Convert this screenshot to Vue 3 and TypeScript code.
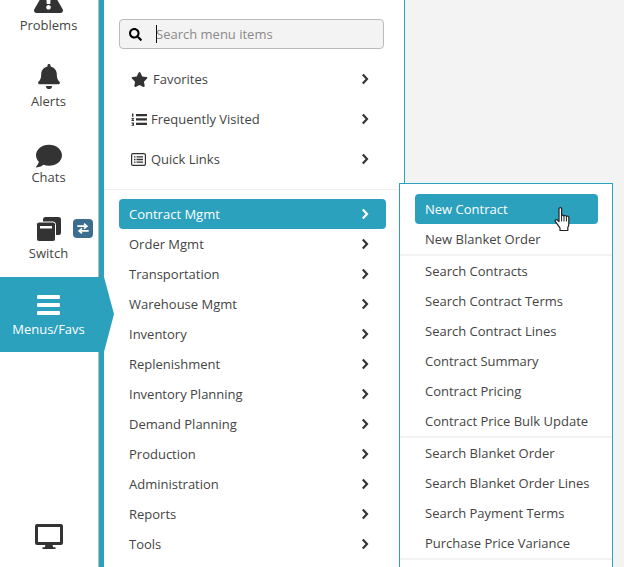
<template>
  <div class="page">
    <aside class="rail">
      <a v-for="item in railItems" :key="item.label" class="rail-item" :class="item.cls">
        <svg class="rail-icon" :viewBox="item.box" :style="{ width: item.w + 'px', height: item.h + 'px' }">
          <path :d="item.d" fill="currentColor" />
        </svg>
        <span class="rail-label">{{ item.label }}</span>
      </a>
      <a class="rail-item switch">
        <svg class="rail-icon" viewBox="0 0 26 26" width="26" height="26">
          <rect x="7" y="1" width="18" height="18" rx="2.5" fill="#333" />
          <rect x="0.5" y="6" width="19" height="19.5" rx="2.5" fill="#333" stroke="#fff" stroke-width="1" />
          <rect x="4" y="10" width="12" height="2.5" fill="#fff" />
        </svg>
        <span class="rail-label">Switch</span>
        <span class="switch-badge">
          <svg viewBox="0 0 20 20" width="20" height="19">
            <path d="M4 7.5h9.5M11 4.8l3.2 2.7-3.2 2.7M16 12.5H6.5M9 9.8l-3.2 2.7 3.2 2.7" fill="none" stroke="#fff" stroke-width="1.7" />
          </svg>
        </span>
      </a>
      <a class="rail-item menus">
        <svg class="bars" viewBox="0 0 23 20" width="23" height="20">
          <path d="M1 0h21a1 1 0 0 1 1 1v2a1 1 0 0 1-1 1H1a1 1 0 0 1-1-1V1a1 1 0 0 1 1-1zm0 8h21a1 1 0 0 1 1 1v2a1 1 0 0 1-1 1H1a1 1 0 0 1-1-1V9a1 1 0 0 1 1-1zm0 8h21a1 1 0 0 1 1 1v2a1 1 0 0 1-1 1H1a1 1 0 0 1-1-1v-2a1 1 0 0 1 1-1z" fill="#fff" />
        </svg>
        <span class="rail-label">Menus/Favs</span>
      </a>
      <div class="rail-bottom">
        <svg viewBox="0 0 28 25" width="28" height="25">
          <path d="M2 0h24a2 2 0 0 1 2 2v17a2 2 0 0 1-2 2h-8.500l.8 2.200h2.200V25H7.500v-1.800h2.200l.8-2.200H2a2 2 0 0 1-2-2V2a2 2 0 0 1 2-2zm1 3v15h22V3z" fill="#333" fill-rule="evenodd" />
        </svg>
      </div>
    </aside>

    <div class="strip"></div>

    <section class="panel">
      <div class="search">
        <svg class="search-icon" viewBox="0 0 512 512" width="13" height="13">
          <path d="M505 442.7L405.300 343c-4.500-4.500-10.600-7-17-7H372c27.600-35.300 44-79.700 44-128C416 93.100 322.900 0 208 0S0 93.100 0 208s93.100 208 208 208c48.300 0 92.700-16.400 128-44v16.300c0 6.400 2.500 12.500 7 17l99.700 99.700c9.400 9.400 24.600 9.400 33.900 0l28.300-28.300c9.400-9.400 9.400-24.600.1-34zM208 336c-70.700 0-128-57.200-128-128 0-70.700 57.200-128 128-128 70.700 0 128 57.200 128 128 0 70.700-57.200 128-128 128z" fill="#000" />
        </svg>
        <span class="search-text">Search menu items</span>
        <span class="caret"></span>
      </div>

      <ul class="shortcuts">
        <li class="shortcut">
          <svg class="star" viewBox="0 0 576 512" width="17" height="15">
            <path d="M259.300 17.800L194 150.200 47.900 171.500c-26.200 3.800-36.700 36.100-17.700 54.600l105.700 103-25 145.500c-4.500 26.300 23.200 46 46.400 33.700L288 439.600l130.700 68.700c23.200 12.200 50.900-7.400 46.400-33.700l-25-145.500 105.700-103c19-18.500 8.500-50.800-17.700-54.600L382 150.200 316.700 17.800c-11.700-23.600-45.600-23.900-57.400 0z" fill="#333" />
          </svg>
          <span class="shortcut-name">Favorites</span>
          <svg class="chev" viewBox="0 0 8 12" width="8" height="12"><path d="M1.800 1.500L6 6l-4.200 4.500" /></svg>
        </li>
        <li class="shortcut">
          <svg class="list-ol" viewBox="0 0 16 13" width="16" height="13">
            <path d="M5 1h11v2.300H5zM5 5.300h11v2.300H5zM5 9.700h11V12H5z" fill="#333" />
            <path d="M1 .5h1.400v3.200H1zM.5 5h2.500v1L1.800 7h1.200v1H.5V7l1.200-1H.5zM.5 9.500H3v3.300H.5v-.8h1.400v-.5H1v-.7h.9v-.4H.5z" fill="#333" />
          </svg>
          <span class="shortcut-name tight">Frequently Visited</span>
          <svg class="chev" viewBox="0 0 8 12" width="8" height="12"><path d="M1.800 1.500L6 6l-4.200 4.500" /></svg>
        </li>
        <li class="shortcut">
          <svg class="list-alt" viewBox="0 0 15 13" width="15" height="13">
            <rect x="0.600" y="0.600" width="13.800" height="11.800" rx="1.400" fill="none" stroke="#333" stroke-width="1.200" />
            <path d="M3 3.200h1.500v1.400H3zM3 5.800h1.500v1.400H3zM3 8.400h1.500v1.400H3zM5.500 3.200H12v1.400H5.500zM5.500 5.800H12v1.400H5.500zM5.500 8.400H12v1.400H5.500z" fill="#333" />
          </svg>
          <span class="shortcut-name wide">Quick Links</span>
          <svg class="chev" viewBox="0 0 8 12" width="8" height="12"><path d="M1.800 1.500L6 6l-4.200 4.500" /></svg>
        </li>
      </ul>

      <ul class="menu">
        <li v-for="(name, i) in menuItems" :key="name" class="menu-row" :class="{ active: i === 0 }">
          <span>{{ name }}</span>
          <svg class="chev" viewBox="0 0 8 12" width="8" height="12"><path d="M1.800 1.500L6 6l-4.200 4.500" /></svg>
        </li>
      </ul>
    </section>

    <div class="rest"></div>

    <div class="flyout">
      <ul v-for="(group, g) in flyoutGroups" :key="g" class="fly-group">
        <li v-for="name in group" :key="name" class="fly-row" :class="{ active: name === 'New Contract' }">{{ name }}</li>
      </ul>
    </div>

    <svg class="hand" viewBox="0 0 18 25" width="18" height="25">
      <path d="M5 1.800c0-1.500 2.600-1.500 2.600 0V9c0-1 2.300-1.200 2.400.2 .2-1 2.300-1 2.400.4 .3-.9 2.300-.7 2.400.7 v6.700c0 1.500-.5 2.600-1 3.500v3H6v-2.500c-1-1.400-3-4-4.600-6.300-.9-1.400.9-2.800 2.200-1.500L5 14.500z" fill="#fff" stroke="#222" stroke-width="1.200" stroke-linejoin="round" />
      <path d="M7.600 9v5.500M10 9.300v5.200M12.400 9.700v4.800" fill="none" stroke="#222" stroke-width="1" />
    </svg>
  </div>
</template>

<script setup lang="ts">
interface RailItem {
  label: string
  cls: string
  box: string
  w: number
  h: number
  d: string
}

const railItems: RailItem[] = [
  {
    label: 'Problems',
    cls: 'problems',
    box: '0 0 576 512',
    w: 29,
    h: 26,
    d: 'M569.517 440.013C587.975 472.007 564.806 512 527.94 512H48.054c-36.937 0-59.999-40.055-41.577-71.987L246.423 24.035c18.467-32.009 64.72-31.951 83.154 0l239.94 416.028zM288 354c-25.405 0-46 20.595-46 46s20.595 46 46 46 46-20.595 46-46-20.595-46-46-46zm-43.673-165.346l7.418 136c.347 6.364 5.609 11.346 11.982 11.346h48.546c6.373 0 11.635-4.982 11.982-11.346l7.418-136c.375-6.874-5.098-12.654-11.982-12.654h-63.383c-6.884 0-12.356 5.78-11.981 12.654z',
  },
  {
    label: 'Alerts',
    cls: 'alerts',
    box: '0 0 448 512',
    w: 22,
    h: 25,
    d: 'M224 512c35.32 0 63.97-28.65 63.97-64H160.03c0 35.35 28.65 64 63.97 64zm215.39-149.71c-19.32-20.76-55.47-51.99-55.47-154.29 0-77.7-54.48-139.9-127.94-155.16V32c0-17.67-14.32-32-31.98-32s-31.98 14.33-31.98 32v20.84C118.56 68.1 64.08 130.3 64.08 208c0 102.3-36.15 133.53-55.47 154.29-6 6.45-8.66 14.16-8.61 21.71.11 16.4 12.98 32 32.1 32h383.8c19.12 0 32-15.6 32.1-32 .05-7.55-2.61-15.27-8.61-21.71z',
  },
  {
    label: 'Chats',
    cls: 'chats',
    box: '0 0 512 512',
    w: 26,
    h: 26,
    d: 'M256 32C114.6 32 0 125.1 0 240c0 49.6 21.4 95 57 130.7C44.5 421.1 2.7 466 2.2 466.5c-2.2 2.3-2.8 5.7-1.5 8.7S4.8 480 8 480c66.3 0 116-31.8 140.6-51.4 32.7 12.3 69 19.4 107.4 19.4 141.4 0 256-93.1 256-208S397.4 32 256 32z',
  },
]

const menuItems = [
  'Contract Mgmt',
  'Order Mgmt',
  'Transportation',
  'Warehouse Mgmt',
  'Inventory',
  'Replenishment',
  'Inventory Planning',
  'Demand Planning',
  'Production',
  'Administration',
  'Reports',
  'Tools',
]

const flyoutGroups = [
  ['New Contract', 'New Blanket Order'],
  ['Search Contracts', 'Search Contract Terms', 'Search Contract Lines', 'Contract Summary', 'Contract Pricing', 'Contract Price Bulk Update'],
  ['Search Blanket Order', 'Search Blanket Order Lines', 'Search Payment Terms', 'Purchase Price Variance'],
]
</script>

<style>
html,
body {
  margin: 0;
  overflow: hidden;
}
</style>

<style scoped>
.page {
  position: relative;
  display: flex;
  width: 624px;
  height: 567px;
  overflow: hidden;
  background: #f3f3f3;
  font-family: "Open Sans", sans-serif;
  font-size: 13px;
  color: #444;
}

ul {
  margin: 0;
  padding: 0;
  list-style: none;
}

.rail {
  position: relative;
  z-index: 2;
  display: flex;
  flex-direction: column;
  flex: none;
  width: 97px;
  padding-right: 1px;
  margin-top: -27px;
  height: 594px;
  background: #fff;
  border-right: 1px solid #bbb;
}

.rail-item {
  position: relative;
  display: flex;
  flex-direction: column;
  align-items: center;
  height: 76px;
  flex: none;
  box-sizing: border-box;
  padding-top: 15px;
  color: #333;
}

.rail-icon {
  display: block;
  height: 26px;
}

.problems .rail-icon {
  margin-top: -1px;
}

.chats .rail-icon {
  margin-top: 3px;
}

.rail-label {
  position: absolute;
  top: 43px;
  left: 0;
  right: 0;
  text-align: center;
  line-height: 18px;
  color: #444;
}

.switch-badge {
  position: absolute;
  top: 18px;
  left: 73px;
  width: 20px;
  height: 19px;
  background: #3b6d8f;
  border-radius: 4px;
}

.switch-badge svg {
  display: block;
}

.menus {
  width: 114px;
  height: 75px;
  padding-top: 18px;
  background: #2ba1be;
  clip-path: polygon(0 0, 104px 0, 114px 37px, 104px 75px, 0 75px);
}

.menus .rail-label {
  right: 17px;
  top: 43px;
  color: #fff;
}

.bars {
  margin-right: 17px;
}

.rail-bottom {
  margin-top: auto;
  margin-bottom: 18px;
  display: flex;
  justify-content: center;
}

.strip {
  flex: none;
  width: 5px;
  background: #2ba1be;
}

.panel {
  position: relative;
  flex: none;
  width: 300px;
  box-sizing: content-box;
  background: #fff;
  border-right: 1px solid #2ba1be;
}

.search {
  position: relative;
  display: flex;
  align-items: center;
  height: 30px;
  width: 265px;
  margin: 19px 0 0 15px;
  box-sizing: border-box;
  padding-left: 9px;
  background: #f3f3f3;
  border: 1px solid #bbb;
  border-radius: 4px;
}

.search-icon {
  flex: none;
}

.search-text {
  margin-left: 14px;
  color: #8a8a8a;
}

.caret {
  position: absolute;
  top: 5px;
  left: 36px;
  width: 1px;
  height: 18px;
  background: #111;
}

.shortcuts {
  margin-top: 10px;
  padding-bottom: 10px;
  border-bottom: 1px solid #f0f0f0;
}

.shortcut {
  display: flex;
  align-items: center;
  height: 40px;
  padding-left: 27px;
  padding-right: 35px;
  color: #444;
}

.shortcut svg:first-child {
  flex: none;
}

.shortcut-name {
  margin-left: 5px;
}

.shortcut-name.tight {
  margin-left: 4px;
}

.shortcut-name.wide {
  margin-left: 5px;
}

.shortcut .chev {
  margin-left: auto;
}

.chev {
  flex: none;
}

.chev path {
  fill: none;
  stroke: #333;
  stroke-width: 2.2;
}

.menu {
  margin-top: 9px;
  margin-left: 15px;
  width: 267px;
}

.menu-row {
  display: flex;
  align-items: center;
  justify-content: space-between;
  height: 30px;
  padding: 0 17px 0 10px;
  border-radius: 4px;
  color: #444;
}

.menu-row.active {
  background: #2ba1be;
  color: #fff;
}

.menu-row.active .chev path {
  stroke: #fff;
}

.flyout {
  position: absolute;
  z-index: 3;
  top: 183px;
  left: 399px;
  width: 214px;
  height: 400px;
  box-sizing: border-box;
  padding-top: 10px;
  background: #fff;
  border: 1px solid #2ba1be;
}

.fly-group {
  padding: 0 14px 0 15px;
  border-bottom: 2px solid #f3f3f3;
}

.fly-row {
  height: 30px;
  line-height: 30px;
  padding-left: 10px;
  border-radius: 4px;
  color: #444;
}

.fly-row.active {
  background: #2ba1be;
  color: #fff;
}

.hand {
  position: absolute;
  z-index: 4;
  top: 207px;
  left: 554px;
}
</style>
